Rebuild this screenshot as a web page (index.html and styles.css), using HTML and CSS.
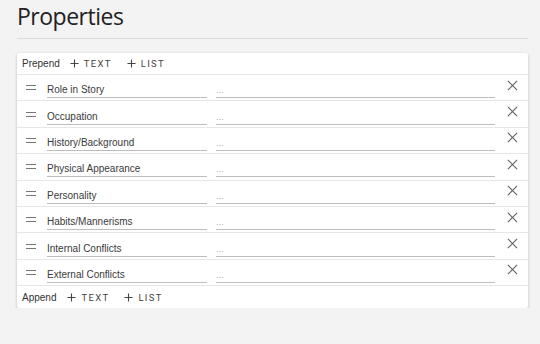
FILE: index.html
```html
<!DOCTYPE html>
<html lang="en">

<head>
    <meta charset="UTF-8">
    <title>Properties</title>
    <link rel="stylesheet" href="styles.css">
</head>

<body>
    <h1 class="title">Properties</h1>
    <div class="card">
        <div class="add-row">
            <span class="add-label">Prepend</span>
            <button class="add-btn"><svg class="plus" viewBox="0 0 10 10"><path d="M5 0.5V9.5M0.5 5H9.5"/></svg>TEXT</button>
            <button class="add-btn"><svg class="plus" viewBox="0 0 10 10"><path d="M5 0.5V9.5M0.5 5H9.5"/></svg>LIST</button>
        </div>
        <div class="prop-row">
            <span class="handle"></span>
            <div class="field name">Role in Story</div>
            <div class="field value">...</div>
            <svg class="close" viewBox="0 0 12 12"><path d="M1 1L11 11M11 1L1 11"/></svg>
        </div>
        <div class="prop-row">
            <span class="handle"></span>
            <div class="field name">Occupation</div>
            <div class="field value">...</div>
            <svg class="close" viewBox="0 0 12 12"><path d="M1 1L11 11M11 1L1 11"/></svg>
        </div>
        <div class="prop-row">
            <span class="handle"></span>
            <div class="field name">History/Background</div>
            <div class="field value">...</div>
            <svg class="close" viewBox="0 0 12 12"><path d="M1 1L11 11M11 1L1 11"/></svg>
        </div>
        <div class="prop-row">
            <span class="handle"></span>
            <div class="field name">Physical Appearance</div>
            <div class="field value">...</div>
            <svg class="close" viewBox="0 0 12 12"><path d="M1 1L11 11M11 1L1 11"/></svg>
        </div>
        <div class="prop-row">
            <span class="handle"></span>
            <div class="field name">Personality</div>
            <div class="field value">...</div>
            <svg class="close" viewBox="0 0 12 12"><path d="M1 1L11 11M11 1L1 11"/></svg>
        </div>
        <div class="prop-row">
            <span class="handle"></span>
            <div class="field name">Habits/Mannerisms</div>
            <div class="field value">...</div>
            <svg class="close" viewBox="0 0 12 12"><path d="M1 1L11 11M11 1L1 11"/></svg>
        </div>
        <div class="prop-row">
            <span class="handle"></span>
            <div class="field name">Internal Conflicts</div>
            <div class="field value">...</div>
            <svg class="close" viewBox="0 0 12 12"><path d="M1 1L11 11M11 1L1 11"/></svg>
        </div>
        <div class="prop-row">
            <span class="handle"></span>
            <div class="field name">External Conflicts</div>
            <div class="field value">...</div>
            <svg class="close" viewBox="0 0 12 12"><path d="M1 1L11 11M11 1L1 11"/></svg>
        </div>
        <div class="add-row append">
            <span class="add-label">Append</span>
            <button class="add-btn"><svg class="plus" viewBox="0 0 10 10"><path d="M5 0.5V9.5M0.5 5H9.5"/></svg>TEXT</button>
            <button class="add-btn"><svg class="plus" viewBox="0 0 10 10"><path d="M5 0.5V9.5M0.5 5H9.5"/></svg>LIST</button>
        </div>
    </div>
</body>

</html>
```

FILE: styles.css
```css
body {
    margin: 0;
    padding: 0 12px 0 17px;
    background-color: #f3f3f3;
    font-family: "Liberation Sans", Arial, sans-serif;
    color: #333;
}

.title {
    margin: 0;
    padding: 4px 0 9px;
    font-family: "Open Sans", sans-serif;
    font-weight: 400;
    font-size: 23px;
    line-height: 25px;
    letter-spacing: -0.5px;
    color: #222;
    border-bottom: 1px solid #dcdcdc;
    margin-bottom: 14px;
}

.card {
    background-color: #fff;
    border-radius: 2px;
    box-shadow: 0 1px 3px rgba(0, 0, 0, 0.25);
}

.add-row {
    display: flex;
    align-items: center;
    height: 21px;
    padding-left: 5px;
    font-size: 10px;
    color: #333;
}

.add-row.append {
    height: 22px;
    border-top: 1px solid #e6e6e6;
}

.add-label {
    margin-right: 10px;
}

.append .add-label {
    margin-right: 11px;
}

.add-btn {
    display: flex;
    align-items: center;
    background: none;
    border: none;
    padding: 0;
    margin-right: 15px;
    font-family: "Roboto", sans-serif;
    font-size: 9.5px;
    font-weight: 400;
    letter-spacing: 1.3px;
    color: #444;
    cursor: pointer;
}

.plus {
    width: 9px;
    height: 9px;
    margin-right: 5px;
    fill: none;
    stroke: #444;
    stroke-width: 1.2;
}

.prop-row {
    display: flex;
    align-items: center;
    height: 25.4px;
    border-top: 1px solid #e6e6e6;
}

.handle {
    width: 10px;
    height: 5px;
    margin: 0 11px 0 9px;
    border-top: 1px solid #777;
    border-bottom: 1px solid #777;
    box-sizing: border-box;
}

.field {
    height: 18px;
    line-height: 16px;
    padding-top: 2px;
    box-sizing: border-box;
    border-bottom: 1px solid #bdbdbd;
    font-size: 10px;
    margin-top: 3px;
    color: #3a3a3a;
}

.field.name {
    width: 160px;
    margin-right: 9px;
}

.field.value {
    width: 279px;
    color: #aaa;
    font-size: 9px;
}

.close {
    width: 11px;
    height: 11px;
    margin-left: 12px;
    margin-top: -5px;
    fill: none;
    stroke: #666;
    stroke-width: 1.3;
}
```
